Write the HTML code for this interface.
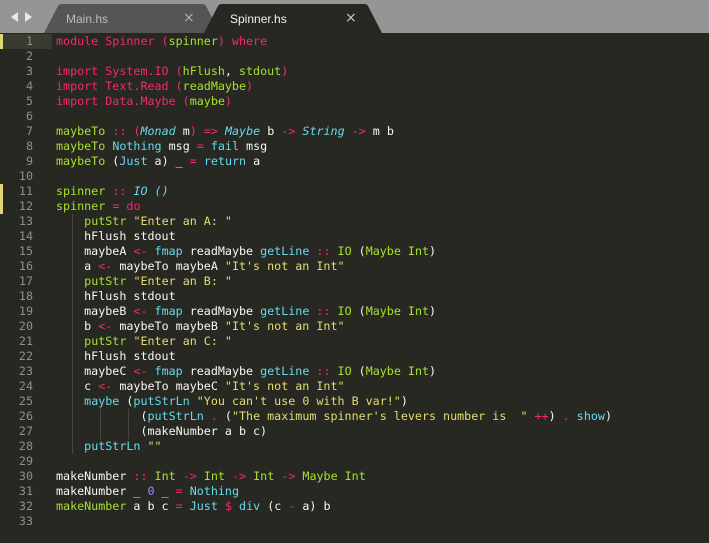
<!DOCTYPE html>
<html><head><meta charset="utf-8"><style>
html,body{margin:0;padding:0;width:709px;height:543px;overflow:hidden;background:#272822;}
#bar{position:absolute;left:0;top:0;width:709px;height:33px;background:#959595;}
.tab{position:absolute;top:4px;height:29px;}
.tab svg{position:absolute;left:0;top:0}
.tl{position:absolute;top:8px;font:12px "Liberation Sans",sans-serif;}
.x{position:absolute;top:6px;font:14px "DejaVu Sans",sans-serif;}
#gut{position:absolute;left:0;top:34px;width:40px;}
.ln{position:absolute;right:0;width:40px;text-align:right;box-sizing:border-box;padding-right:7px;height:15px;line-height:15px;font:11.7px "DejaVu Sans Mono",monospace;color:#8f908a;}
#code{position:absolute;left:56px;top:34px;font:11.7px "DejaVu Sans Mono",monospace;color:#f8f8f2;white-space:pre;line-height:15px;}
.k{color:#f92672}.g{color:#a6e22e}.c{color:#66d9ef}.i{color:#66d9ef;font-style:italic}.s{color:#e6db74}.p{color:#ae81ff}
.guide{position:absolute;width:1px;background:#46463d;}
.mk{position:absolute;left:0;width:3px;background:#e0d67a;}
</style></head><body>
<div id="bar">
 <div style="position:absolute;left:11px;top:12px;width:0;height:0;border-top:5px solid transparent;border-bottom:5px solid transparent;border-right:7px solid #e8e8e8"></div>
 <div style="position:absolute;left:25px;top:12px;width:0;height:0;border-top:5px solid transparent;border-bottom:5px solid transparent;border-left:7px solid #e8e8e8"></div>
 <div class="tab" style="left:44px;width:180px">
  <svg width="180" height="29"><path d="M0 29 L14 2 Q15 0 18 0 L158 0 Q161 0 162 2 L176 29 Z" fill="#555555"/></svg>
  <span class="tl" style="left:22px;color:#bdbdbd">Main.hs</span>
  <span class="x" style="left:139px;color:#b0b0b0">×</span>
 </div>
 <div class="tab" style="left:204px;width:182px">
  <svg width="182" height="29"><path d="M0 29 L14 2 Q15 0 18 0 L160 0 Q163 0 164 2 L178 29 Z" fill="#272822"/></svg>
  <span class="tl" style="left:26px;color:#f0f0f0">Spinner.hs</span>
  <span class="x" style="left:141px;color:#c8c8c8">×</span>
 </div>
</div>
<div style="position:absolute;left:0;top:34px;width:52px;height:15px;background:#3a3a31"></div>
<div class="mk" style="top:34px;height:15px"></div>
<div class="mk" style="top:184px;height:30px"></div>
<div class="guide" style="left:72px;top:214px;height:240px"></div>
<div class="guide" style="left:100px;top:409px;height:30px"></div>
<div class="guide" style="left:128px;top:409px;height:30px"></div>
<div id="gut">
<div class="ln" style="top:0">1</div><div class="ln" style="top:15px">2</div><div class="ln" style="top:30px">3</div><div class="ln" style="top:45px">4</div><div class="ln" style="top:60px">5</div><div class="ln" style="top:75px">6</div><div class="ln" style="top:90px">7</div><div class="ln" style="top:105px">8</div><div class="ln" style="top:120px">9</div><div class="ln" style="top:135px">10</div><div class="ln" style="top:150px">11</div><div class="ln" style="top:165px">12</div><div class="ln" style="top:180px">13</div><div class="ln" style="top:195px">14</div><div class="ln" style="top:210px">15</div><div class="ln" style="top:225px">16</div><div class="ln" style="top:240px">17</div><div class="ln" style="top:255px">18</div><div class="ln" style="top:270px">19</div><div class="ln" style="top:285px">20</div><div class="ln" style="top:300px">21</div><div class="ln" style="top:315px">22</div><div class="ln" style="top:330px">23</div><div class="ln" style="top:345px">24</div><div class="ln" style="top:360px">25</div><div class="ln" style="top:375px">26</div><div class="ln" style="top:390px">27</div><div class="ln" style="top:405px">28</div><div class="ln" style="top:420px">29</div><div class="ln" style="top:435px">30</div><div class="ln" style="top:450px">31</div><div class="ln" style="top:465px">32</div><div class="ln" style="top:480px">33</div>
</div>
<div id="code"><span class="k">module Spinner (</span><span class="g">spinner</span><span class="k">) where</span>

<span class="k">import System.IO (</span><span class="g">hFlush</span>, <span class="g">stdout</span><span class="k">)</span>
<span class="k">import Text.Read (</span><span class="g">readMaybe</span><span class="k">)</span>
<span class="k">import Data.Maybe (</span><span class="g">maybe</span><span class="k">)</span>

<span class="g">maybeTo</span> <span class="k">::</span> <span class="k">(</span><span class="i">Monad</span> m<span class="k">)</span> <span class="k">=&gt;</span> <span class="i">Maybe</span> b <span class="k">-&gt;</span> <span class="i">String</span> <span class="k">-&gt;</span> m b
<span class="g">maybeTo</span> <span class="c">Nothing</span> msg <span class="k">=</span> <span class="c">fail</span> msg
<span class="g">maybeTo</span> (<span class="c">Just</span> a) _ <span class="k">=</span> <span class="c">return</span> a

<span class="g">spinner</span> <span class="k">::</span> <span class="i">IO ()</span>
<span class="g">spinner</span> <span class="k">=</span> <span class="k">do</span>
    <span class="g">putStr</span> <span class="s">"Enter an A: "</span>
    hFlush stdout
    maybeA <span class="k">&lt;-</span> <span class="c">fmap</span> readMaybe <span class="c">getLine</span> <span class="k">::</span> <span class="g">IO</span> (<span class="g">Maybe Int</span>)
    a <span class="k">&lt;-</span> maybeTo maybeA <span class="s">"It's not an Int"</span>
    <span class="g">putStr</span> <span class="s">"Enter an B: "</span>
    hFlush stdout
    maybeB <span class="k">&lt;-</span> <span class="c">fmap</span> readMaybe <span class="c">getLine</span> <span class="k">::</span> <span class="g">IO</span> (<span class="g">Maybe Int</span>)
    b <span class="k">&lt;-</span> maybeTo maybeB <span class="s">"It's not an Int"</span>
    <span class="g">putStr</span> <span class="s">"Enter an C: "</span>
    hFlush stdout
    maybeC <span class="k">&lt;-</span> <span class="c">fmap</span> readMaybe <span class="c">getLine</span> <span class="k">::</span> <span class="g">IO</span> (<span class="g">Maybe Int</span>)
    c <span class="k">&lt;-</span> maybeTo maybeC <span class="s">"It's not an Int"</span>
    <span class="c">maybe</span> (<span class="c">putStrLn</span> <span class="s">"You can't use 0 with B var!"</span>)
            (<span class="c">putStrLn</span> <span class="k">.</span> (<span class="s">"The maximum spinner's levers number is  "</span> <span class="k">++</span>) <span class="k">.</span> <span class="c">show</span>)
            (makeNumber a b c)
    <span class="c">putStrLn</span> <span class="s">""</span>

makeNumber <span class="k">::</span> <span class="g">Int</span> <span class="k">-&gt;</span> <span class="g">Int</span> <span class="k">-&gt;</span> <span class="g">Int</span> <span class="k">-&gt;</span> <span class="g">Maybe Int</span>
makeNumber _ <span class="p">0</span> _ <span class="k">=</span> <span class="c">Nothing</span>
<span class="g">makeNumber</span> a b c <span class="k">=</span> <span class="c">Just</span> <span class="k">$</span> <span class="c">div</span> (c <span class="k">-</span> a) b
</div>
</body></html>
